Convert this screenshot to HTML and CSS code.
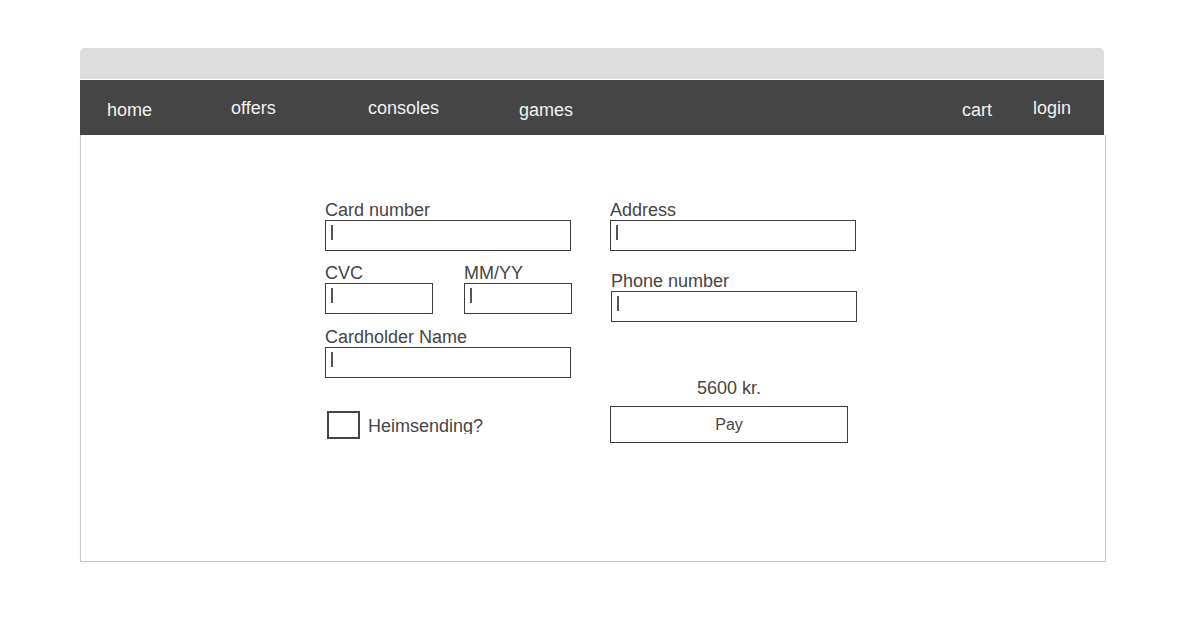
FILE: index.html
```html
<!DOCTYPE html>
<html lang="en">
<head>
<meta charset="utf-8">
<title>Checkout</title>
<link rel="stylesheet" href="styles.css">
</head>
<body>
<div class="window">
  <div class="titlebar"></div>
  <nav class="nav">
    <a class="nav-link nav-home">home</a>
    <a class="nav-link nav-offers hi">offers</a>
    <a class="nav-link nav-consoles hi">consoles</a>
    <a class="nav-link nav-games">games</a>
    <span class="nav-spacer"></span>
    <a class="nav-link nav-cart">cart</a>
    <a class="nav-link nav-login hi">login</a>
  </nav>
  <main class="content">
    <div class="form">
      <div class="col col-left">
        <div class="field">
          <div class="label">Card number</div>
          <div class="input wide"><span class="caret"></span></div>
        </div>
        <div class="row2">
          <div class="field">
            <div class="label">CVC</div>
            <div class="input small"><span class="caret"></span></div>
          </div>
          <div class="field">
            <div class="label">MM/YY</div>
            <div class="input small"><span class="caret"></span></div>
          </div>
        </div>
        <div class="field holder">
          <div class="label">Cardholder Name</div>
          <div class="input wide"><span class="caret"></span></div>
        </div>
        <div class="check-row">
          <span class="checkbox"></span>
          <span class="check-label">Heimsending?</span>
        </div>
      </div>
      <div class="col col-right">
        <div class="field">
          <div class="label">Address</div>
          <div class="input wide"><span class="caret"></span></div>
        </div>
        <div class="field phone">
          <div class="label">Phone number</div>
          <div class="input wide"><span class="caret"></span></div>
        </div>
        <div class="price">5600 kr.</div>
        <div class="pay">Pay</div>
      </div>
    </div>
  </main>
</div>
</body>
</html>
```
FILE: styles.css
```css
* { box-sizing: border-box; }

html, body {
  margin: 0;
  padding: 0;
  background: #ffffff;
  font-family: "Liberation Sans", Arial, sans-serif;
}

.window {
  margin: 48px 0 0 80px;
  width: 1026px;
}

.titlebar {
  width: 1024px;
  height: 32px;
  background: #dddddd;
  border-radius: 5px 5px 0 0;
  border-bottom: 1px solid #ffffff;
}

.nav {
  width: 1024px;
  height: 55px;
  background: #454545;
  display: flex;
  align-items: flex-start;
  padding: 20px 0 0 27px;
}

.nav-link {
  color: #f2f2f2;
  font-size: 18px;
  line-height: 20px;
  text-decoration: none;
}

.nav-link.hi { margin-top: -2px; }

.nav-home { width: 124px; }
.nav-offers { width: 137px; }
.nav-consoles { width: 151px; }
.nav-games { width: 60px; }
.nav-spacer { flex: 1; }
.nav-cart { width: 71px; }
.nav-login { margin-right: 33px; }

.content {
  width: 1026px;
  height: 427px;
  border: 1px solid #c8c8c8;
  border-top: none;
  box-shadow: -1px 0 2px rgba(0,0,0,0.04);
  padding: 65px 0 0 244px;
}

.form {
  display: flex;
  gap: 38px;
}

.col {
  display: flex;
  flex-direction: column;
}

.col-left { width: 247px; }
.col-right { width: 247px; }

.label {
  font-size: 18px;
  line-height: 20px;
  color: #454545;
  white-space: nowrap;
}

.input {
  height: 31px;
  border: 1px solid #3d3d3d;
  padding: 4px 0 0 5px;
  background: #fff;
}

.input.wide { width: 246px; }
.input.small { width: 108px; }

.caret {
  display: block;
  width: 2px;
  height: 15px;
  background: #555555;
}

.row2 {
  display: flex;
  gap: 31px;
  margin-top: 12px;
}

.holder { margin-top: 13px; }

.check-row {
  display: flex;
  align-items: flex-start;
  margin-top: 33px;
}

.checkbox {
  width: 33px;
  height: 28px;
  margin-left: 2px;
  border: 2px solid #444444;
}

.check-label {
  margin: 5px 0 0 8px;
  height: 18px;
  overflow: hidden;
  font-size: 18px;
  line-height: 20px;
  color: #454545;
}

.phone {
  margin-top: 20px;
  margin-left: 1px;
}

.price {
  width: 238px;
  margin-top: 56px;
  text-align: center;
  font-size: 18px;
  line-height: 20px;
  color: #454545;
}

.pay {
  width: 238px;
  height: 37px;
  margin-top: 8px;
  border: 1px solid #3d3d3d;
  display: flex;
  align-items: center;
  justify-content: center;
  font-size: 16px;
  color: #454545;
}
```
